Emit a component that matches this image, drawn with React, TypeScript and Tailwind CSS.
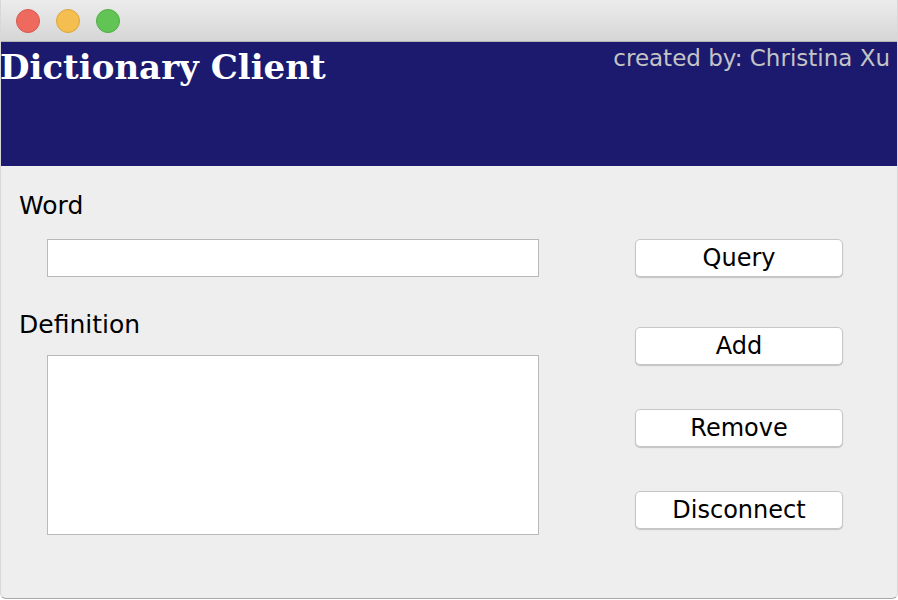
export default function App() {
  const sans = "font-['DejaVu_Sans',sans-serif]";
  const buttons = [
    {label: "Query", mt: "mt-[73px]"},
    {label: "Add", mt: "mt-[50px]"},
    {label: "Remove", mt: "mt-[44px]"},
    {label: "Disconnect", mt: "mt-[44px]"},
  ];

  return (
    <div className="w-[898px] h-[600px] bg-white">
      <div className="flex flex-col w-[898px] h-[599px] bg-[#eeeeee] rounded-b-[6px] border-x border-b border-x-[#d8d8d8] border-b-[#a8a8a8] overflow-hidden">
        {/* title bar */}
        <div className="flex items-center gap-[16px] h-[42px] shrink-0 px-[15px] bg-gradient-to-b from-[#ececec] to-[#d6d6d6] border-b border-[#b4b4b4]">
          <span className="size-[24px] rounded-full bg-[#ee6a5f] border border-[#d8584d]" />
          <span className="size-[24px] rounded-full bg-[#f5bf4f] border border-[#dca53c]" />
          <span className="size-[24px] rounded-full bg-[#61c454] border border-[#4fae42]" />
        </div>

        {/* header */}
        <div className="flex justify-between h-[124px] shrink-0 bg-[#1b1a6f]">
          <h1 className="font-['DejaVu_Serif',serif] font-bold text-white text-[34px] leading-[44px] mt-[3px] -ml-[1px]">
            Dictionary Client
          </h1>
          <span className={`${sans} text-[#c4c4c4] text-[23px] leading-[30px] mt-[1px] mr-[7px]`}>
            created by: Christina Xu
          </span>
        </div>

        {/* body */}
        <div className="flex flex-1">
          <div className="flex flex-col w-[539px] pl-[18px]">
            <label className={`${sans} text-black text-[25px] leading-[30px] mt-[25px]`}>Word</label>
            <input className="ml-[28px] mt-[18px] w-[492px] h-[38px] bg-white border border-[#b9b9b9] outline-none" />
            <label className={`${sans} text-black text-[25px] leading-[30px] mt-[33px]`}>Definition</label>
            <textarea className="ml-[28px] mt-[15px] w-[492px] h-[180px] bg-white border border-[#b9b9b9] outline-none resize-none" />
          </div>
          <div className="flex flex-col ml-[95px] w-[208px]">
            {buttons.map((b) => (
              <button
                key={b.label}
                className={`${b.mt} ${sans} h-[38px] w-[208px] rounded-[5px] bg-white border border-[#c6c6c6] shadow-[0_1px_1px_rgba(0,0,0,0.18)] text-black text-[24px] leading-[36px]`}>
                {b.label}
              </button>
            ))}
          </div>
        </div>
      </div>
    </div>
  );
}
